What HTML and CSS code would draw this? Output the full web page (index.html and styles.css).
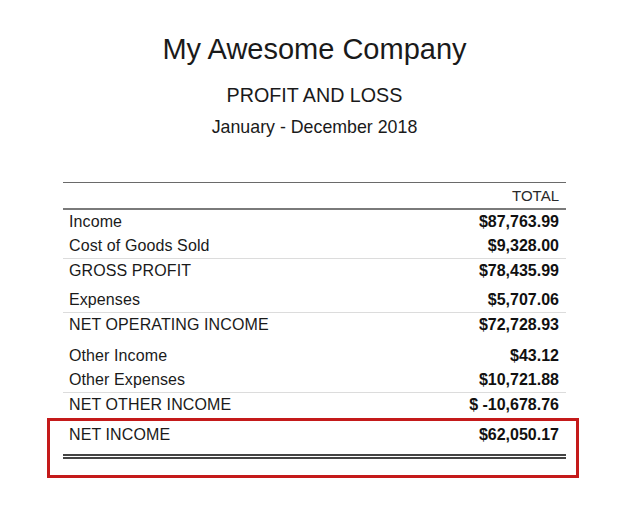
FILE: index.html
```html
<!DOCTYPE html>
<html>
<head>
<meta charset="utf-8">
<link rel="stylesheet" href="styles.css">
</head>
<body>
<div class="report">
  <div class="header">
    <div class="company">My Awesome Company</div>
    <div class="title">PROFIT AND LOSS</div>
    <div class="period">January - December 2018</div>
  </div>
  <div class="table">
    <div class="row head"><span></span><span>TOTAL</span></div>
    <div class="section">
      <div class="row"><span>Income</span><span class="amt">$87,763.99</span></div>
      <div class="row sep"><span>Cost of Goods Sold</span><span class="amt">$9,328.00</span></div>
      <div class="row"><span>GROSS PROFIT</span><span class="amt">$78,435.99</span></div>
    </div>
    <div class="section">
      <div class="row sep"><span>Expenses</span><span class="amt">$5,707.06</span></div>
      <div class="row"><span>NET OPERATING INCOME</span><span class="amt">$72,728.93</span></div>
    </div>
    <div class="section other">
      <div class="row"><span>Other Income</span><span class="amt">$43.12</span></div>
      <div class="row sep"><span>Other Expenses</span><span class="amt">$10,721.88</span></div>
      <div class="row"><span>NET OTHER INCOME</span><span class="amt">$ -10,678.76</span></div>
    </div>
    <div class="net">
      <div class="row total"><span>NET INCOME</span><span class="amt">$62,050.17</span></div>
    </div>
  </div>
</div>
</body>
</html>
```

FILE: styles.css
```css
html, body {
  margin: 0;
  padding: 0;
  background: #ffffff;
}
body {
  font-family: "Liberation Sans", Arial, sans-serif;
  color: #1a1a1a;
}
.report {
  width: 632px;
  height: 520px;
  display: flex;
  flex-direction: column;
}
.header {
  display: flex;
  flex-direction: column;
  align-items: center;
  padding-top: 32px;
  padding-right: 3px;
}
.company {
  font-size: 29px;
  line-height: 34px;
}
.title {
  font-size: 19.7px;
  line-height: 24px;
  margin-top: 17px;
}
.period {
  font-size: 17.8px;
  line-height: 22px;
  margin-top: 9px;
}
.table {
  width: 503px;
  margin-top: 44px;
  margin-left: 63px;
  border-top: 1px solid #6a6a6a;
}
.row {
  display: flex;
  justify-content: space-between;
  height: 24px;
  align-items: center;
  font-size: 16px;
  line-height: 18px;
  padding: 0 7px 0 6px;
}
.row span:first-child {
  letter-spacing: 0.1px;
}
.row.head {
  height: 24px;
  border-bottom: 2px solid #7a7a7a;
  font-size: 15px;
  color: #2a2a2a;
  padding-top: 1px;
}
.row.sep {
  border-bottom: 1px solid #dcdcdc;
}
.amt {
  font-weight: bold;
  color: #111;
}
.section + .section {
  margin-top: 5px;
}
.section.other {
  margin-top: 7px;
}
.net {
  position: relative;
  margin-top: 6px;
}
.net::before {
  content: "";
  position: absolute;
  left: -16px;
  right: -13px;
  top: -5px;
  height: 54px;
  border: 3px solid #c41a1a;
}
.net::after {
  content: "";
  display: block;
  margin-top: 7px;
  height: 1px;
  border-top: 2px solid #444;
  border-bottom: 2px solid #444;
}
```
